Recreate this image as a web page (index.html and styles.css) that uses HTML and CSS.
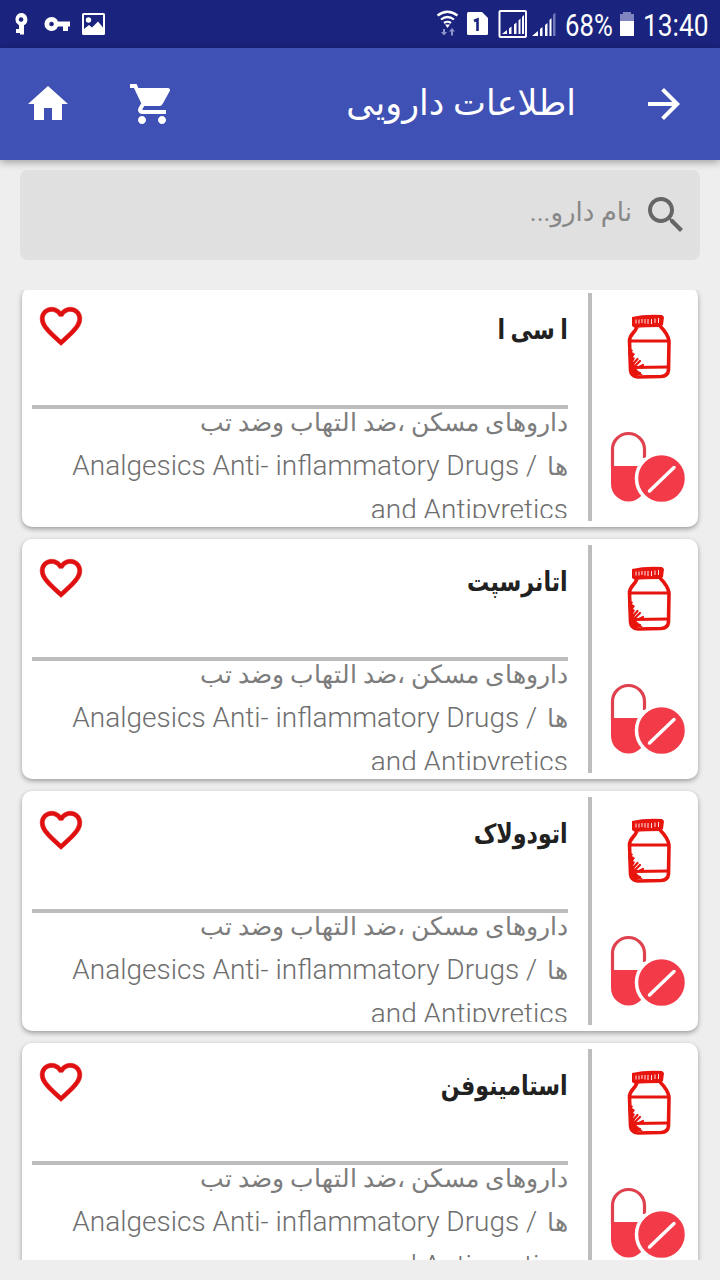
FILE: index.html
```html
<!DOCTYPE html>
<html lang="fa" dir="rtl">
<head>
    <meta charset="UTF-8">
    <meta name="viewport" content="width=device-width, initial-scale=1.0">
    <title>اطلاعات دارویی</title>
    <link rel="stylesheet" href="styles.css">
</head>
<body>
    <svg class="sprite" width="0" height="0">
        <symbol id="heart" viewBox="0 0 24 24">
            <path fill="#e01010" stroke="#e01010" stroke-width=".25" d="M16.5 3c-1.74 0-3.41.81-4.5 2.09C10.91 3.81 9.24 3 7.5 3 4.42 3 2 5.42 2 8.5c0 3.78 3.4 6.86 8.55 11.54L12 21.35l1.45-1.32C18.6 15.36 22 12.28 22 8.5 22 5.42 19.58 3 16.5 3zm-4.4 15.55l-.1.1-.1-.1C7.14 14.24 4 11.39 4 8.5 4 6.5 5.5 5 7.5 5c1.54 0 3.04.99 3.57 2.36h1.87C13.46 5.99 14.96 5 16.5 5c2 0 3.5 1.5 3.5 3.5 0 2.89-3.14 5.74-7.9 10.05z"/>
        </symbol>
        <symbol id="bottle" viewBox="0 0 46 66">
            <path fill="#e8150f" d="M5 3Q18 0 35 1l2 2-1 8-3 2Q18 13 8 14l-3-2z"/>
            <path stroke="#fff" stroke-width=".9" d="M9 5.500v4M12 5.500v4M15 5v4M18 5v4.500M21 5v5M24.500 5v5M28 4.500v4.500M31.500 4v5"/>
            <path fill="none" stroke="#e8150f" stroke-width="3.600" stroke-linejoin="round" d="M10 13C8 19 2.500 20 2.500 27L3.500 56Q4 62 11 63L34 62.500Q41 62 41.500 56L42 27Q41 20 33 12"/>
            <path fill="none" stroke="#e8150f" stroke-width="2.800" d="M2 27H42M7 53.500 42 53"/>
            <path fill="#e8150f" d="M1 34l5 2-1 2 3 2-2 3 2 1-2 4 2 1-1 3 5 6 4 3H7l-4-4z"/>
            <path stroke="#e8150f" stroke-width="2.200" stroke-linecap="round" d="M6 50l4.500-5M8 52l5-5M12 53l4-2M7 57l6 2"/>
        </symbol>
        <symbol id="pills" viewBox="0 0 76 72">
            <path fill="none" stroke="#e0414f" stroke-width="3.200" d="M2.500 37V18.500a16 16 0 0 1 32 0V27"/>
            <path fill="#f33a48" d="M1 35h35v18a17.500 17.500 0 0 1-35 0z"/>
            <circle cx="51.500" cy="47.500" r="25" fill="#f33a48" stroke="#fff" stroke-width="3.500"/>
            <path stroke="#fff" stroke-width="3.400" stroke-linecap="round" d="M39.500 60 64 36.500"/>
        </symbol>
    </svg>

    <div class="status" dir="ltr">
        <svg class="status-left" width="120" height="48" viewBox="0 0 120 48" fill="#fff">
            <path fill-rule="evenodd" d="M21 13a6.500 6.500 0 0 1 3 12.200V34.500h-4V33h-4v-4h3v-3.800A6.500 6.500 0 0 1 21 13zm0 4.200a2.300 2.300 0 1 0 .1 0z"/>
            <path fill-rule="evenodd" d="M51.500 17a7 7 0 0 1 6.500 4.500h12v5h-2V31h-5v-4.500h-5A7 7 0 1 1 51.500 17zm0 4.700a2.300 2.300 0 1 0 .1 0z"/>
            <path fill-rule="evenodd" d="M83.500 13h20a1.500 1.500 0 0 1 1.500 1.500v19a1.500 1.500 0 0 1-1.500 1.500h-20a1.500 1.500 0 0 1-1.500-1.500v-19a1.500 1.500 0 0 1 1.500-1.500zM84 15v14l5-4 3 2.500 6-6 5 6V15z"/>
            <circle cx="88.500" cy="20" r="2.700"/>
        </svg>
        <svg class="status-right" width="125" height="48" viewBox="435 0 125 48" fill="none">
            <g stroke="#fff" stroke-width="2.200">
                <path d="M437.500 15.500q10-7.500 20 0M441 19.500q6.500-5 13 0M444 23q3.500-2.500 7 0"/>
            </g>
            <path fill="#fff" d="M445 24.500h5l-2.500 3.500z"/>
            <path fill="#8f94cc" d="M443 29h2v3h2l-3 3.500-3-3.500h2zM451 35.500h2v-4h2l-3-3.500-3 3.500h2z"/>
            <path fill="#fff" d="M468.500 12H482l6 6v15.500a1.500 1.500 0 0 1-1.500 1.500h-18a1.500 1.500 0 0 1-1.500-1.500v-20a1.500 1.500 0 0 1 1.500-1.500z"/>
            <path stroke="#1a237e" stroke-width="2.600" d="M474 21l3.500-1.500V31"/>
            <rect x="499.500" y="11" width="26.500" height="26" rx="1" stroke="#fff" stroke-width="2"/>
            <path fill="#fff" d="M502 34l5-4v4zM509 28.500l2.500-2V34H509zM514 24.500l2.500-2V34H514zM518.500 20.500l2-2V34h-2zM522 17l2-2v19h-2zM532 36l6-5v5zM540 29l2.500-2v9H540zM545 25l2.500-2v13H545zM549.500 20l2-2v18h-2z"/>
            <path fill="#7177b8" d="M553 14.500l2.500-2V36H553z"/>
        </svg>
        <span class="battery-text">68%</span>
        <svg class="battery" width="16" height="24" viewBox="0 0 16 24">
            <path fill="#8085c2" d="M4 0h8v2h3v8H1V2h3z"/>
            <path fill="#fff" d="M1 9h14v15H1z"/>
        </svg>
        <span class="clock">13:40</span>
    </div>

    <div class="toolbar">
        <svg class="icon" viewBox="0 0 24 24"><path fill="#fff" d="M12 4l-1.410 1.410L16.170 11H4v2h12.170l-5.580 5.590L12 20l8-8z"/></svg>
        <h1>اطلاعات دارویی</h1>
        <svg class="icon cart" viewBox="0 0 24 24"><path fill="#fff" d="M7 18c-1.100 0-1.990.9-1.990 2S5.900 22 7 22s2-.9 2-2-.9-2-2-2zM1 2v2h2l3.600 7.590-1.350 2.450c-.16.28-.25.61-.25.96 0 1.100.9 2 2 2h12v-2H7.420c-.14 0-.25-.11-.25-.25l.03-.12.9-1.630h7.450c.75 0 1.410-.41 1.750-1.030l3.580-6.490c.08-.14.12-.31.12-.48 0-.55-.45-1-1-1H5.210l-.94-2H1zm16 16c-1.100 0-1.990.9-1.990 2s.89 2 1.990 2 2-.9 2-2-.9-2-2-2z"/></svg>
        <svg class="icon" viewBox="0 0 24 24"><path fill="#fff" d="M10 20v-6h4v6h5v-8h3L12 3 2 12h3v8z"/></svg>
    </div>

    <div class="search">
        <svg class="icon" viewBox="0 0 24 24"><path fill="#666" d="M15.500 14h-.79l-.28-.27C15.410 12.590 16 11.110 16 9.500 16 5.910 13.090 3 9.500 3S3 5.910 3 9.500 5.910 16 9.500 16c1.610 0 3.090-.59 4.230-1.570l.27.28v.79l5 4.990L20.490 19l-4.990-5zm-6 0C7.010 14 5 11.990 5 9.500S7.010 5 9.500 5 14 7.010 14 9.500 11.990 14 9.500 14z"/></svg>
        <span class="placeholder">نام دارو...</span>
    </div>

    <div class="list">
        <div class="card">
            <div class="kinds">
                <svg class="bottle"><use href="#bottle"/></svg>
                <svg class="pills"><use href="#pills"/></svg>
            </div>
            <div class="info">
                <div class="top">
                    <h3>ا سی ا</h3>
                    <svg class="heart"><use href="#heart"/></svg>
                </div>
                <p><span class="fa">داروهای مسکن ،ضد التهاب وضد تب</span><br><span class="fa">ها</span> / Analgesics Anti- inflammatory Drugs<br>and Antipyretics</p>
            </div>
        </div>
        <div class="card">
            <div class="kinds">
                <svg class="bottle"><use href="#bottle"/></svg>
                <svg class="pills"><use href="#pills"/></svg>
            </div>
            <div class="info">
                <div class="top">
                    <h3>اتانرسپت</h3>
                    <svg class="heart"><use href="#heart"/></svg>
                </div>
                <p><span class="fa">داروهای مسکن ،ضد التهاب وضد تب</span><br><span class="fa">ها</span> / Analgesics Anti- inflammatory Drugs<br>and Antipyretics</p>
            </div>
        </div>
        <div class="card">
            <div class="kinds">
                <svg class="bottle"><use href="#bottle"/></svg>
                <svg class="pills"><use href="#pills"/></svg>
            </div>
            <div class="info">
                <div class="top">
                    <h3>اتودولاک</h3>
                    <svg class="heart"><use href="#heart"/></svg>
                </div>
                <p><span class="fa">داروهای مسکن ،ضد التهاب وضد تب</span><br><span class="fa">ها</span> / Analgesics Anti- inflammatory Drugs<br>and Antipyretics</p>
            </div>
        </div>
        <div class="card">
            <div class="kinds">
                <svg class="bottle"><use href="#bottle"/></svg>
                <svg class="pills"><use href="#pills"/></svg>
            </div>
            <div class="info">
                <div class="top">
                    <h3>استامینوفن</h3>
                    <svg class="heart"><use href="#heart"/></svg>
                </div>
                <p><span class="fa">داروهای مسکن ،ضد التهاب وضد تب</span><br><span class="fa">ها</span> / Analgesics Anti- inflammatory Drugs<br>and Antipyretics</p>
            </div>
        </div>
    </div>
</body>
</html>
```
FILE: styles.css
```css
* {
    box-sizing: border-box;
}
body {
    font-family: Roboto, "DejaVu Sans", sans-serif;
    margin: 0;
    height: 1280px;
    overflow: hidden;
    background-color: #eee;
}
svg {
    display: block;
    flex-shrink: 0;
}
.sprite {
    position: absolute;
}
.status {
    display: flex;
    align-items: center;
    height: 48px;
    background-color: #1a237e;
    color: white;
    font-size: 31px;
    line-height: 48px;
    white-space: nowrap;
}
.status-right {
    margin-left: 315px;
}
.battery-text {
    width: 53px;
    margin: 3px 0 0 5px;
    transform: scaleX(0.83);
    transform-origin: left;
}
.battery {
    margin-left: 1px;
}
.clock {
    width: 70px;
    margin: 3px 0 0 8px;
    transform: scaleX(0.85);
    transform-origin: left;
}
.toolbar {
    display: flex;
    align-items: center;
    height: 112px;
    padding: 0 32px 0 24px;
    background-color: #3f51b5;
    box-shadow: 0 2px 8px rgba(0, 0, 0, 0.35);
    color: white;
}
.icon {
    width: 48px;
    height: 48px;
}
.toolbar h1 {
    flex: 1;
    margin: 0 64px 0 0;
    font-size: 35px;
    font-weight: normal;
    line-height: 110px;
}
.cart {
    margin-left: 56px;
}
.search {
    display: flex;
    align-items: center;
    height: 90px;
    margin: 10px 20px 30px;
    padding-right: 10px;
    border-radius: 8px;
    background-color: #e0e0e0;
}
.placeholder {
    margin: 0 10px 6px 0;
    color: #888;
    font-size: 26px;
}
.list {
    height: 970px;
    padding: 0 22px;
    overflow: hidden;
}
.card {
    display: flex;
    height: 240px;
    margin-bottom: 12px;
    padding: 6px 0;
    border-radius: 10px;
    background: white;
    box-shadow: 0 2px 5px rgba(0, 0, 0, 0.35);
}
.card:first-child {
    margin-top: -3px;
}
.kinds {
    width: 110px;
    border-left: 4px solid #bdbdbd;
}
.bottle {
    width: 46px;
    height: 66px;
    margin: 21px 25px 0 0;
}
.pills {
    width: 76px;
    height: 72px;
    margin: 51px 12px 0 0;
}
.info {
    width: 536px;
    margin-right: 20px;
}
.top {
    display: flex;
    justify-content: space-between;
    height: 116px;
    border-bottom: 4px solid #bdbdbd;
}
.top h3 {
    margin: 13px 0 0;
    color: #212121;
    font-size: 27px;
    line-height: 48px;
    transform: scaleX(0.82);
    transform-origin: right;
}
.heart {
    width: 50px;
    height: 50px;
    margin: 8px 0 0 4px;
}
.info p {
    height: 118px;
    margin: -9px 0 0;
    overflow: hidden;
    color: #6e6e6e;
    font-size: 28px;
    font-weight: 300;
    line-height: 44px;
    white-space: nowrap;
}
.fa {
    margin-left: 3px;
    color: #7c7c7c;
    font-size: 25px;
    line-height: 1;
}
```
